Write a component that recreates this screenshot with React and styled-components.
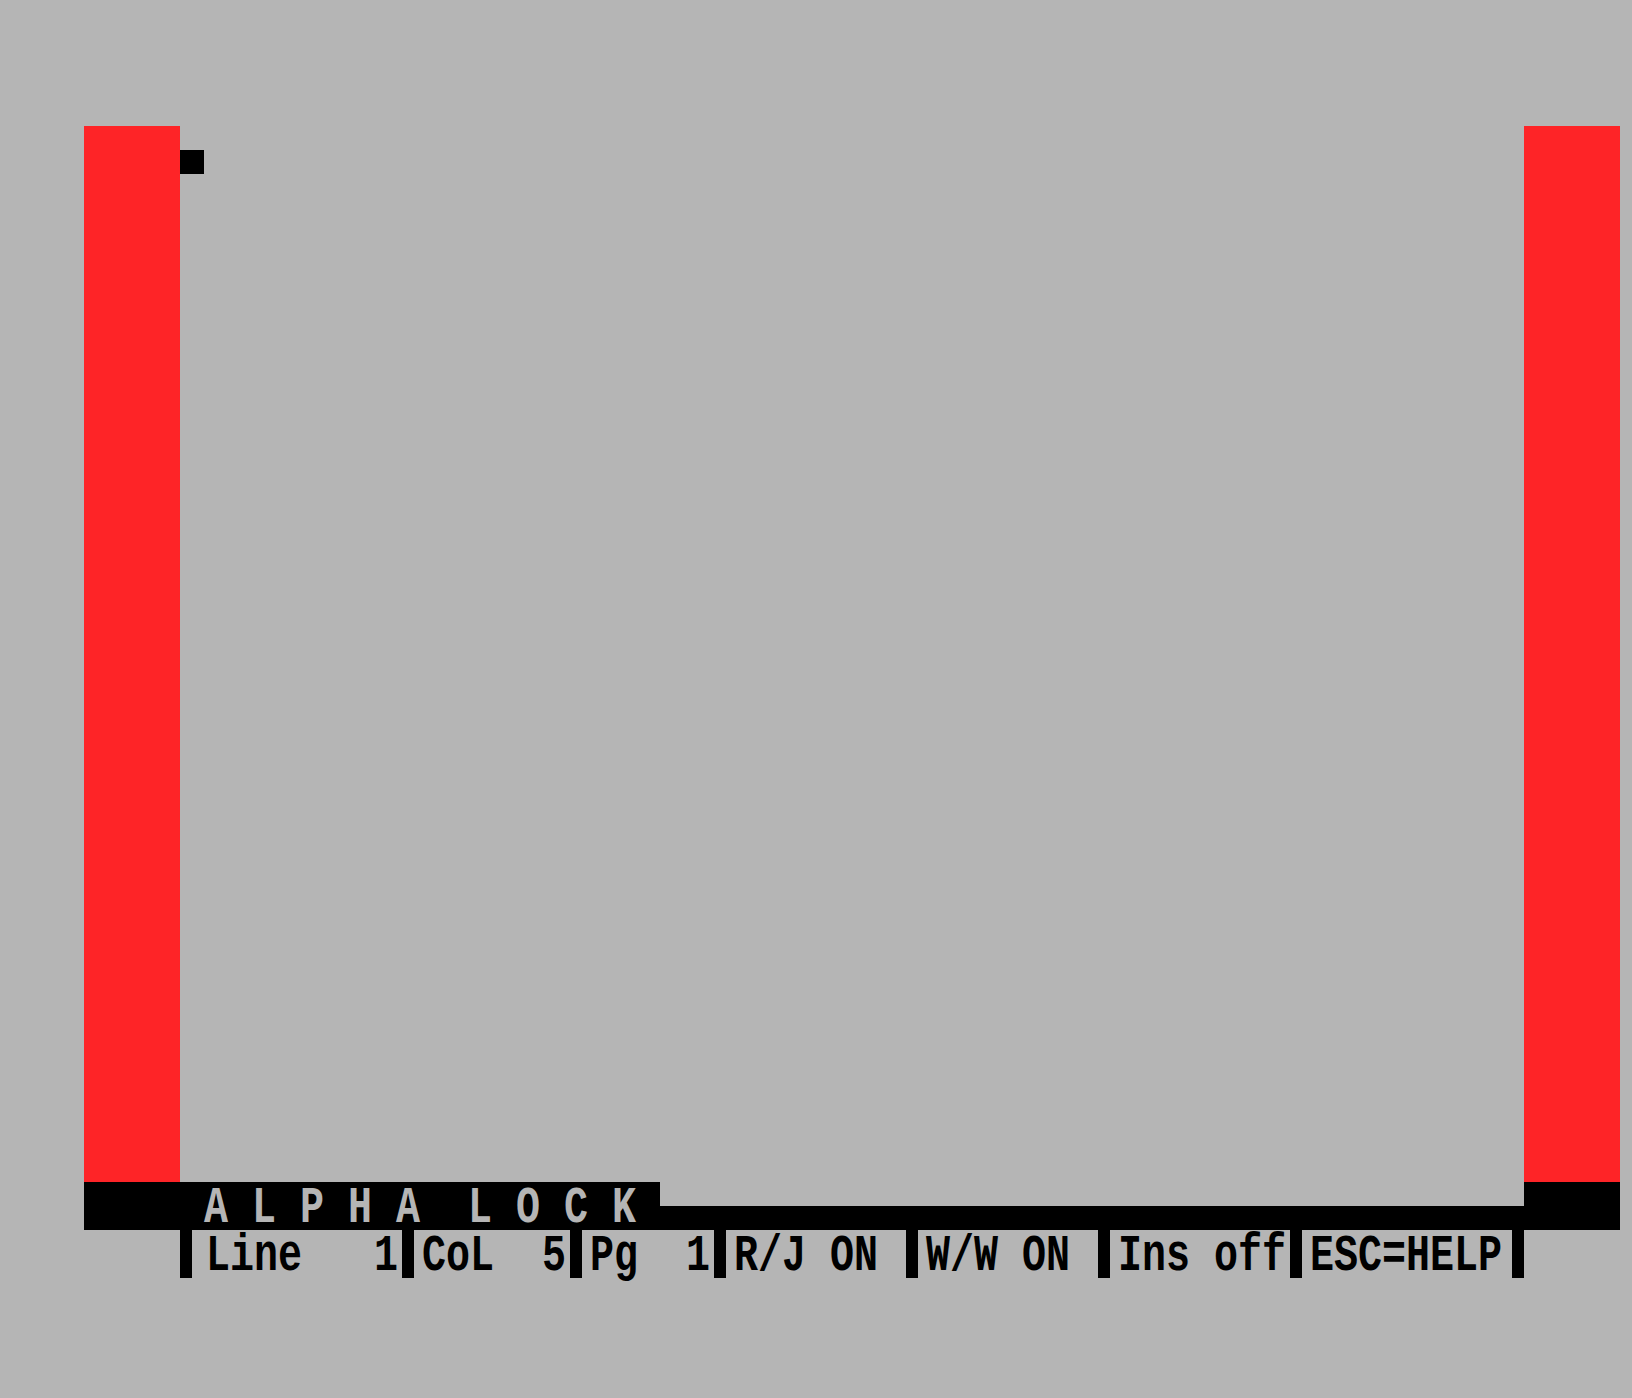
import styled, { createGlobalStyle } from "styled-components";

const GRAY = "#b5b5b5";
const RED = "#fe2427";
const BLACK = "#000000";

const GlobalStyle = createGlobalStyle`
  html, body {
    margin: 0;
    padding: 0;
    background: ${GRAY};
  }
  body {
    font-family: "Liberation Mono", "DejaVu Sans Mono", monospace;
  }
`;

const Screen = styled.div`
  width: 1632px;
  min-height: 1398px;
  box-sizing: border-box;
  padding: 126px 12px 0 84px;
  background: ${GRAY};
`;

const Frame = styled.div`
  display: grid;
  grid-template-columns: 96px 1344px 96px;
  height: 1056px;
`;

const Border = styled.div`
  background: ${RED};
`;

const Field = styled.div`
  background: ${GRAY};
  display: flex;
  flex-direction: column;
  padding-top: 24px;
`;

const Cursor = styled.div`
  width: 24px;
  height: 24px;
  background: ${BLACK};
`;

const AlphaRow = styled.div`
  display: flex;
  height: 48px;
  background: ${BLACK};
`;

const AlphaBox = styled.div`
  flex: none;
  width: 576px;
  box-sizing: border-box;
  padding-left: 120px;
`;

const FieldTail = styled.div`
  width: 864px;
  height: 24px;
  background: ${GRAY};
`;

const Glyphs = styled.span`
  display: inline-block;
  font-family: "Liberation Mono", "DejaVu Sans Mono", monospace;
  font-size: 40px;
  font-weight: bold;
  line-height: 48px;
  white-space: pre;
  color: ${(p) => (p.$inverse ? GRAY : BLACK)};
  transform: translateY(3px) scaleY(1.3);
`;

const StatusLine = styled.div`
  display: flex;
  height: 48px;
  margin-left: 96px;
`;

const Segment = styled.div`
  flex: none;
  display: flex;
  width: ${(p) => p.$width}px;
  height: 48px;
`;

const Bar = styled.div`
  flex: none;
  width: 12px;
  height: 48px;
  background: ${BLACK};
`;

const Label = styled.div`
  padding-left: ${(p) => p.$lead}px;
`;

const segments = [
  { text: "Line   1", width: 222, lead: 14 },
  { text: "CoL  5", width: 168, lead: 8 },
  { text: "Pg  1", width: 144, lead: 8 },
  { text: "R/J ON", width: 192, lead: 8 },
  { text: "W/W ON", width: 192, lead: 8 },
  { text: "Ins off", width: 192, lead: 8 },
  { text: "ESC=HELP", width: 222, lead: 8 },
];

export default function App() {
  return (
    <>
      <GlobalStyle />
      <Screen>
        <Frame>
          <Border />
          <Field>
            <Cursor />
          </Field>
          <Border />
        </Frame>
        <AlphaRow>
          <AlphaBox>
            <Glyphs $inverse>{"A L P H A  L O C K"}</Glyphs>
          </AlphaBox>
          <FieldTail />
        </AlphaRow>
        <StatusLine>
          {segments.map((s) => (
            <Segment key={s.text} $width={s.width}>
              <Bar />
              <Label $lead={s.lead}>
                <Glyphs>{s.text}</Glyphs>
              </Label>
            </Segment>
          ))}
          <Bar />
        </StatusLine>
      </Screen>
    </>
  );
}
